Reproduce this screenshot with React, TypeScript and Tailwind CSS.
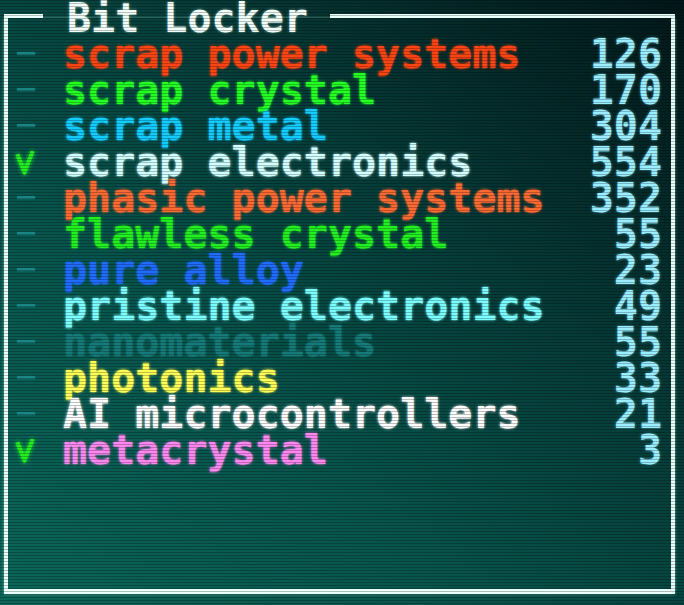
import React from "react";

type Item = { name: string; color: string; qty: number; checked?: boolean };

const items: Item[] = [
  { name: "scrap power systems", color: "text-[#ff4513]", qty: 126 },
  { name: "scrap crystal", color: "text-[#24ff24]", qty: 170 },
  { name: "scrap metal", color: "text-[#14ccff]", qty: 304 },
  { name: "scrap electronics", color: "text-[#d2ffff]", qty: 554, checked: true },
  { name: "phasic power systems", color: "text-[#ff6a33]", qty: 352 },
  { name: "flawless crystal", color: "text-[#22f022]", qty: 55 },
  { name: "pure alloy", color: "text-[#1f6cff]", qty: 23 },
  { name: "pristine electronics", color: "text-[#7cffff]", qty: 49 },
  { name: "nanomaterials", color: "text-[#167b78]", qty: 55 },
  { name: "photonics", color: "text-[#ffff55]", qty: 33 },
  { name: "AI microcontrollers", color: "text-[#ffffff]", qty: 21 },
  { name: "metacrystal", color: "text-[#ff88f0]", qty: 3, checked: true },
];

function Check() {
  return (
    <svg width="22" height="24" viewBox="0 0 22 24" className="mt-[7px] ml-[6px] drop-shadow-[0_0_2px_#22ff22]">
      <path d="M4 5 L10.5 21 L18 2" fill="none" stroke="#22ee22" strokeWidth="4" strokeLinecap="square" strokeLinejoin="miter" />
    </svg>
  );
}

export default function App() {
  return (
    <div className="relative w-[684px] h-[605px] overflow-hidden bg-[linear-gradient(to_top_right,#0b6659_0%,#08544c_35%,#053a37_65%,#021719_100%)] font-['DejaVu_Sans_Mono',monospace] font-bold text-[40px] leading-[36px]">
      <div className="pt-[18px] pl-[4px]">
        <div className="flex flex-col w-[671px] h-[576px] border-x-[4px] border-b-[5px] border-[#e8fffa] shadow-[0_0_3px_rgba(190,255,240,0.5)]">
          <div className="-mt-[18px] -mx-[4px] flex h-[36px] shrink-0">
            <div className="mt-[14px] h-[4px] w-[39px] bg-[#e8fffa]" />
            <div className="ml-[24px] whitespace-pre text-[#f2fff9] [text-shadow:0_0_3px_rgba(220,255,245,0.6)]">Bit Locker</div>
            <div className="ml-[22px] mt-[14px] h-[4px] flex-1 bg-[#e8fffa]" />
          </div>
          {items.map((it) => (
            <div key={it.name} className="flex h-[36px] shrink-0">
              <div className="w-[55px] flex">
                {it.checked ? (
                  <Check />
                ) : (
                  <div className="mt-[16px] ml-[9px] h-[3px] w-[18px] bg-[#1a8585] shadow-[0_0_2px_rgba(30,140,140,0.6)]" />
                )}
              </div>
              <div className={`flex-1 whitespace-pre ${it.color} [text-shadow:0_0_3px_currentColor]`}>{it.name}</div>
              <div className="pr-[9px] text-right text-[#9aeeff] [text-shadow:0_0_3px_rgba(150,235,255,0.6)]">{it.qty}</div>
            </div>
          ))}
        </div>
      </div>
      <div className="pointer-events-none absolute inset-0 bg-[repeating-linear-gradient(to_bottom,rgba(0,0,0,0.25)_0px,rgba(0,0,0,0.25)_1px,transparent_1px,transparent_3px)]" />
    </div>
  );
}
